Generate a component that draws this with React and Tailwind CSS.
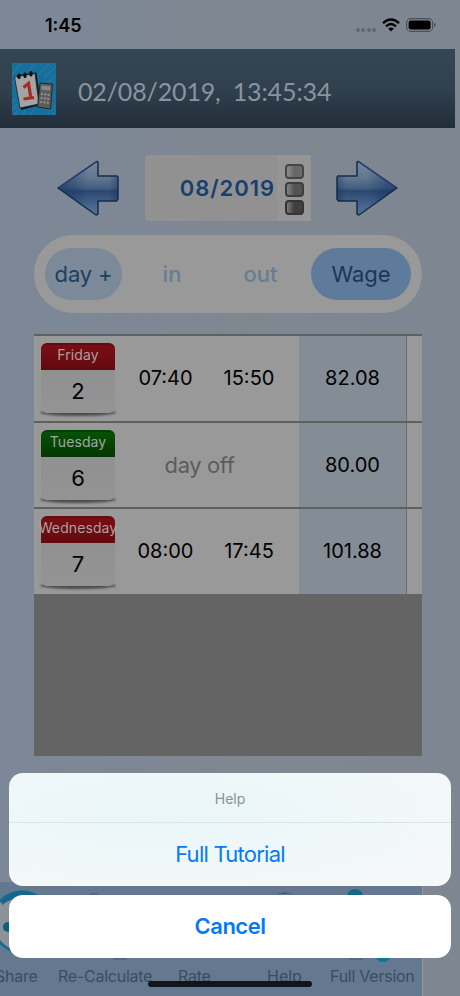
import React from "react";

function StatusBar() {
  return (
    <div className="flex h-[49px] items-start justify-between pl-[45px] pr-[24px] pt-[15px] text-black">
      <span className="text-[18px] font-semibold leading-[22px]">1:45</span>
      <div className="flex h-[20px] items-center">
        <div className="mr-[6px] mt-[9px] flex gap-[1.5px]">
          {[0, 1, 2, 3].map((i) => (
            <i key={i} className="h-[4px] w-[4px] rounded-full bg-[#626870]" />
          ))}
        </div>
        <svg width="18" height="14" viewBox="0 0 18 14" className="mr-[6px]">
          <path d="M1 5.2Q9-2 17 5.2M4 8.3Q9 3.8 14 8.3" fill="none" stroke="#000" strokeWidth="2.4" />
          <path d="M9 13.5L6.1 10.6Q9 8.2 11.9 10.6Z" />
        </svg>
        <svg width="30" height="14" viewBox="0 0 30 14">
          <rect x=".6" y=".6" width="26" height="12.8" rx="4" fill="none" stroke="#4b5058" strokeWidth="1.1" />
          <rect x="2.6" y="2.4" width="22" height="9.2" rx="2.3" />
          <path d="M28 4.8Q29.7 5.4 29.7 7T28 9.2Z" fill="#4b5058" />
        </svg>
      </div>
    </div>
  );
}

function AppIcon() {
  return (
    <svg width="44" height="52" viewBox="0 0 44 52" className="shrink-0">
      <rect width="44" height="52" fill="#176f9c" />
      <path
        d="M0 11L10 0M0 20L4 16M18 6L24 0M26 12L38 0M32 15L44 3M36 20L44 12M0 47L5 41M2 52L8 45M10 52L14 47M18 52L22 47M35 52L44 42M0 40L3 36M40 52L44 47"
        stroke="#3584ab"
        strokeWidth=".8"
      />
      <path d="M5 12L24.500 9.500L29 42L9 47Z" fill="#0d1b24" />
      <path d="M2.500 14L23 10.500L27 41L8 45Z" fill="#a5a3a4" stroke="#17242c" strokeWidth=".8" />
      <path d="M7 14.500V12M13 13.500V11M19 12V9.500" stroke="#081015" strokeWidth="3" strokeLinecap="round" />
      <path d="M11.500 24.500L16.500 20.500L18.800 34.500M11.500 36L22 34.500" fill="none" stroke="#a72c20" strokeWidth="3.200" />
      <path d="M28 20L40.500 21L38.500 46L25.500 44Z" fill="#5e5b59" stroke="#242729" />
      <path d="M29.500 22.500L38.500 23.600L38.200 27.500L29.200 26.500Z" fill="#85898a" />
      <path d="M29 31L38 32M28.600 35L37.700 36M28.200 39L37.400 40" stroke="#8f9190" strokeWidth="2" strokeDasharray="2 1.300" />
    </svg>
  );
}

function Arrow({ flip }) {
  return (
    <svg width="62" height="56" viewBox="0 0 62 56" className={flip ? "-scale-x-100" : ""}>
      <defs>
        <linearGradient id={flip ? "arrowR" : "arrowL"} x1="0" y1="0" x2="0" y2="1">
          <stop offset="0" stopColor="#76889e" />
          <stop offset=".3" stopColor="#627790" />
          <stop offset=".5" stopColor="#425f83" />
          <stop offset=".55" stopColor="#2c4870" />
          <stop offset=".8" stopColor="#45638c" />
          <stop offset="1" stopColor="#5c7392" />
        </linearGradient>
        <linearGradient id={flip ? "tipR" : "tipL"} x1="0" x2="1">
          <stop offset="0" stopColor="#142e5c" stopOpacity=".6" />
          <stop offset=".5" stopColor="#142e5c" stopOpacity="0" />
          <stop offset=".85" stopColor="#142e5c" stopOpacity="0" />
          <stop offset="1" stopColor="#142e5c" stopOpacity=".4" />
        </linearGradient>
      </defs>
      <path
        d="M1 28L39.500 1.500L41 2V16H60L61 17V39L59.500 41H41V54L39 55Z"
        fill={flip ? "url(#arrowR)" : "url(#arrowL)"}
      />
      <path
        d="M1 28L39.500 1.500L41 2V16H60L61 17V39L59.500 41H41V54L39 55Z"
        fill={flip ? "url(#tipR)" : "url(#tipL)"}
        stroke="#172b4b"
        strokeWidth="1.500"
        strokeLinejoin="round"
      />
      <path d="M2 27.500L38.500 2.500" stroke="#2b3e80" strokeWidth="1.300" />
    </svg>
  );
}

function MonthPicker() {
  return (
    <div className="flex h-[66px] w-[166px] rounded-[4px] bg-[#919191]">
      <div className="flex flex-1 items-center justify-end pr-[2px] text-[22px] font-semibold tracking-[0.95px] text-[#173f70]">
        08/2019
      </div>
      <div className="flex w-[34px] flex-col items-center justify-center gap-[3px] bg-[#959595] pt-[2px]">
        <i className="h-[15px] w-[19px] rounded-[4px] border-2 border-[#464646] bg-linear-to-r from-[#8d8d8d] via-[#666666] to-[#6c6c6c]" />
        <i className="h-[15px] w-[19px] rounded-[4px] border-2 border-[#3d3d3d] bg-linear-to-r from-[#858585] via-[#515151] to-[#555555]" />
        <i className="h-[15px] w-[19px] rounded-[4px] border-2 border-[#343434] bg-linear-to-r from-[#7b7b7b] via-[#3d3d3d] to-[#414141]" />
      </div>
    </div>
  );
}

function Filters() {
  return (
    <div className="mx-[34px] mt-[14px] flex h-[78px] w-[388px] items-center rounded-full bg-[#999999] pl-[11px] pr-[11px] text-[22px]">
      <div className="flex h-[52px] w-[77px] items-center justify-center rounded-full bg-[#7b8999] tracking-[-0.15px] text-[#20405f]">day +</div>
      <div className="w-[100px] text-center font-medium text-[#687c92]">in</div>
      <div className="w-[77px] text-center font-medium text-[#687c92]">out</div>
      <div className="ml-auto flex h-[52px] w-[100px] items-center justify-center rounded-full bg-[#5f7b9b] text-[#1b3658]">Wage</div>
    </div>
  );
}

function DayBadge({ day, num, green }) {
  return (
    <div className="relative ml-[7px] mt-[7px] h-[73px] w-[74px] shrink-0">
      <i className="absolute -left-[1px] bottom-0 h-[7px] w-[76px] rounded-[50%] bg-[#4c4c4c] blur-[1px]" />
      <div className="relative h-[70px] rounded-[6px] bg-linear-to-b from-[#8d8e8f] to-[#949494]">
        <div
          className={
            green
              ? "flex h-[27px] justify-center rounded-t-[6px] border-t-2 border-[#063f06] bg-linear-to-b from-[#075207] to-[#043604] text-[#a1a69e]"
              : "flex h-[27px] justify-center rounded-t-[6px] border-t-2 border-[#650b10] bg-linear-to-b from-[#790e14] to-[#620a10] text-[#ad9fa0]"
          }
        >
          <span className="whitespace-nowrap text-[14px] leading-[20px] tracking-[0.1px]">{day}</span>
        </div>
        <div className="text-center text-[22px] leading-[42px] text-black">{num}</div>
      </div>
    </div>
  );
}

const rows = [
  { day: "Friday", num: 2, start: "07:40", end: "15:50", wage: "82.08" },
  { day: "Tuesday", num: 6, off: true, wage: "80.00", green: true },
  { day: "Wednesday", num: 7, start: "08:00", end: "17:45", wage: "101.88" },
];

function Table() {
  return (
    <div className="mx-[34px] mt-[21px] h-[422px] w-[388px] bg-[#646464]">
      {rows.map((r) => (
        <div key={r.day} className="flex h-[86.6px] border-t-2 border-[#606060] bg-[#999999] text-[20px] text-black">
          <DayBadge day={r.day} num={r.num} green={r.green} />
          <div className="flex flex-1 pt-[28px] leading-[28px]">
            {r.off ? (
              <div className="w-[169px] text-center text-[22px] tracking-[-0.4px] text-[#5c5c5c]">day off</div>
            ) : (
              <>
                <div className="ml-[9px] w-[83px] text-center">{r.start}</div>
                <div className="w-[84px] text-center">{r.end}</div>
              </>
            )}
          </div>
          <div className="w-[108px] border-r border-[#686d71] bg-[#848c95] pt-[28px] text-center leading-[28px]">{r.wage}</div>
          <div className="w-[15px]" />
        </div>
      ))}
    </div>
  );
}

function TabBar() {
  return (
    <div className="absolute bottom-0 left-0 h-[114px] w-[423px] border-r border-[#969a9d] bg-[#64788f] text-[16px] text-[#394c63]">
      <svg width="423" height="90" viewBox="0 0 423 90" className="absolute left-0 top-0">
        <circle cx="22" cy="40" r="30" fill="#8b9299" stroke="#176b92" strokeWidth="3" />
        <path d="M2 18Q19 2 35 14L29 18Q15 13 2 23Z" fill="#13678c" />
        <circle cx="8" cy="45" r="5" fill="#08627e" />
        <path d="M90 12H98M113 77H127M278 12Q285 10 292 12M349 77H363" stroke="#4b677f" strokeWidth="1.500" />
        <circle cx="355" cy="15" r="8" fill="#12698b" />
        <circle cx="383" cy="72" r="8" fill="#087896" />
      </svg>
      <div className="absolute -left-[5px] top-[84px] flex whitespace-nowrap leading-[20px] tracking-[-0.25px]">
        <span className="w-[63px]">Share</span>
        <span className="w-[120px]">Re-Calculate</span>
        <span className="w-[89px]">Rate</span>
        <span className="w-[63px] tracking-normal">Help</span>
        <span>Full Version</span>
      </div>
    </div>
  );
}

function ActionSheet() {
  return (
    <div className="absolute bottom-[38px] left-[9px] flex w-[442px] flex-col gap-[9px] text-center text-[#067af6]">
      <div className="h-[113px] overflow-hidden rounded-[14px] bg-[radial-gradient(ellipse_at_35%_35%,#eaf6fa_0%,#eef7f9_40%,#f5f8f8_85%)]">
        <div className="h-[50px] border-b border-[#d8e5e9] text-[14px] leading-[51px] text-[#8b9295]">Help</div>
        <div className="text-[22px] leading-[63px] tracking-[-0.75px]">Full Tutorial</div>
      </div>
      <div className="h-[63px] rounded-[14px] bg-white text-[22px] font-semibold leading-[63px] tracking-[-0.5px]">Cancel</div>
    </div>
  );
}

export default function App() {
  return (
    <div className="relative h-[996px] w-[460px] overflow-hidden bg-linear-to-r from-[#7c8898] via-[#7f8791] to-[#7e8691] font-['Inter',sans-serif]">
      <StatusBar />
      <header className="flex h-[79px] w-[455px] items-center bg-linear-to-b from-[#344653] via-[#30404e] to-[#222e39] pl-[12px]">
        <AppIcon />
        <span className="ml-[22px] mt-[4px] flex gap-[12px] whitespace-nowrap font-['Lato',sans-serif] text-[25px] leading-[30px] text-[#8a949e]">
          <span className="tracking-[-0.15px]">02/08/2019,</span>
          <span className="tracking-[-0.1px]">13:45:34</span>
        </span>
      </header>
      <div className="mt-[27px] flex items-center pl-[57px]">
        <Arrow />
        <div className="ml-[26px] mr-[25px]">
          <MonthPicker />
        </div>
        <Arrow flip />
      </div>
      <Filters />
      <Table />
      <TabBar />
      <ActionSheet />
      <div className="absolute bottom-[9px] left-[148px] h-[6px] w-[164px] rounded-full bg-[#111418]" />
    </div>
  );
}
